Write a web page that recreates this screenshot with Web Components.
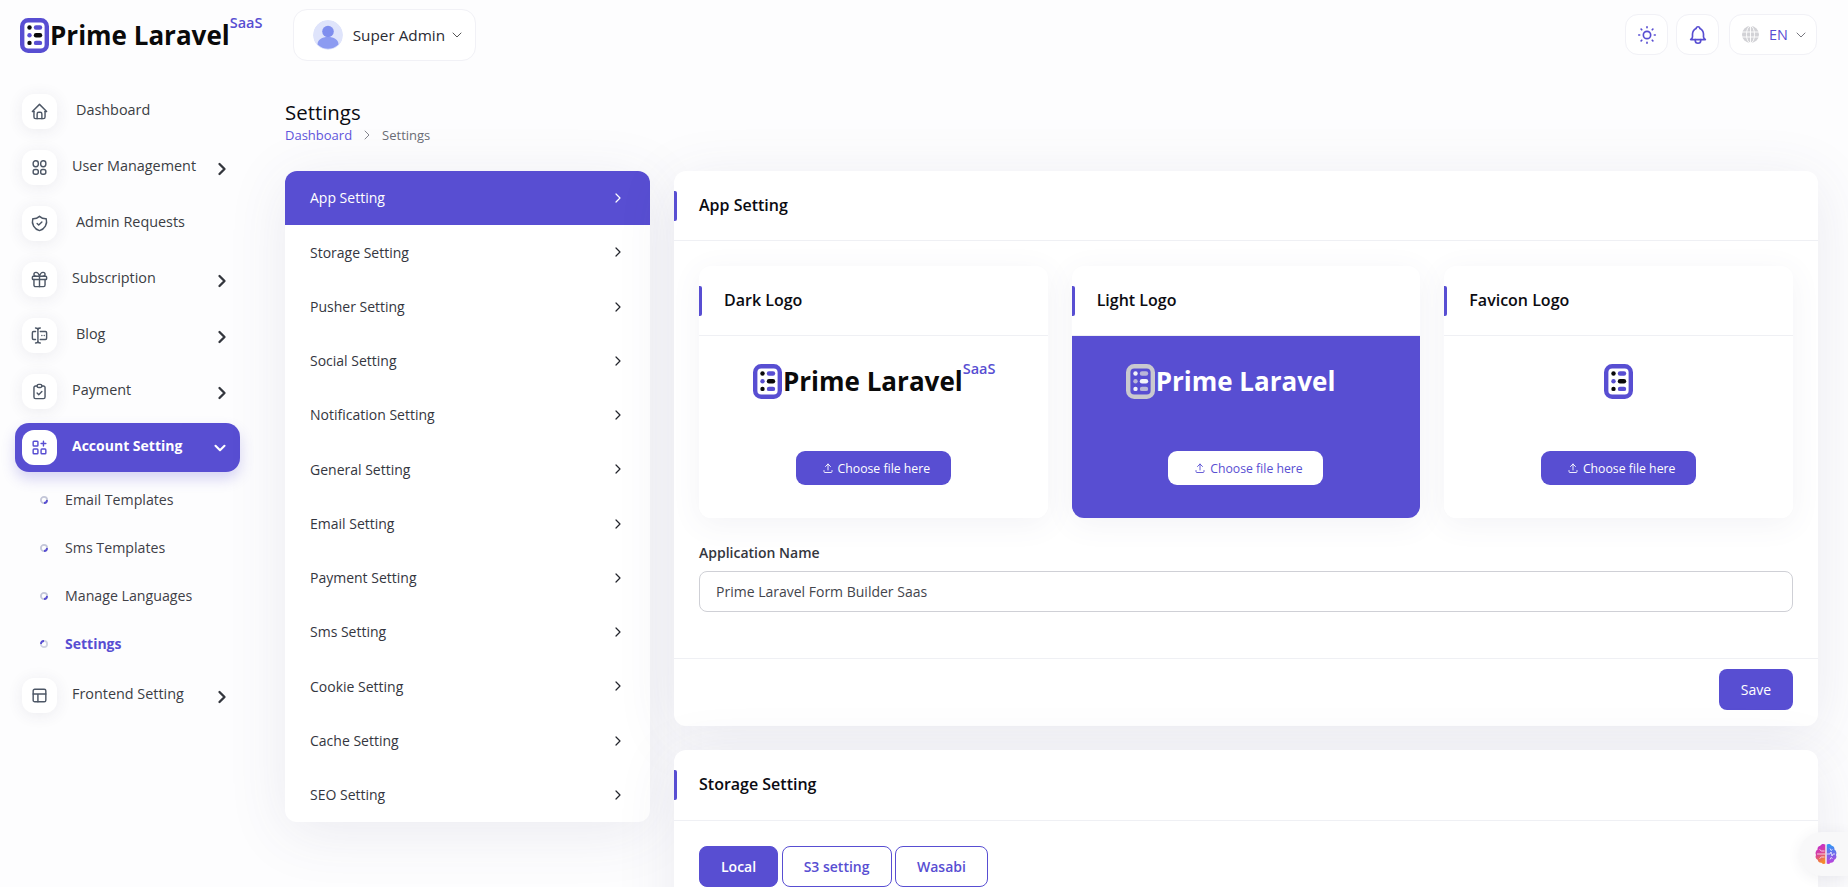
<!DOCTYPE html>
<html lang="en">
<head>
<meta charset="utf-8">
<title>Settings</title>
<style>
html,body{margin:0;padding:0;height:887px;overflow:hidden;background:#fdfdfe;font-family:"Open Sans","Noto Sans",sans-serif;}
</style>
</head>
<body>
<pl-shell>
  <pl-topbar slot="top"></pl-topbar>
  <pl-sidebar slot="side">
    <pl-side-item icon="home" gap="19">Dashboard</pl-side-item>
    <pl-side-item icon="grid" arrow="right">User Management</pl-side-item>
    <pl-side-item icon="shield" gap="19">Admin Requests</pl-side-item>
    <pl-side-item icon="gift" arrow="right">Subscription</pl-side-item>
    <pl-side-item icon="cursor" gap="19" arrow="right">Blog</pl-side-item>
    <pl-side-item icon="clipboard" arrow="right">Payment</pl-side-item>
    <pl-side-item icon="category" arrow="down" active>Account Setting</pl-side-item>
    <pl-sub-list>
      <pl-sub-item>Email Templates</pl-sub-item>
      <pl-sub-item>Sms Templates</pl-sub-item>
      <pl-sub-item>Manage Languages</pl-sub-item>
      <pl-sub-item active>Settings</pl-sub-item>
    </pl-sub-list>
    <pl-side-item icon="table" arrow="right">Frontend Setting</pl-side-item>
  </pl-sidebar>
  <pl-page-head slot="main"></pl-page-head>
  <pl-settings slot="main">
    <pl-menu slot="menu">
      <pl-menu-item active>App Setting</pl-menu-item>
      <pl-menu-item>Storage Setting</pl-menu-item>
      <pl-menu-item>Pusher Setting</pl-menu-item>
      <pl-menu-item>Social Setting</pl-menu-item>
      <pl-menu-item>Notification Setting</pl-menu-item>
      <pl-menu-item>General Setting</pl-menu-item>
      <pl-menu-item>Email Setting</pl-menu-item>
      <pl-menu-item>Payment Setting</pl-menu-item>
      <pl-menu-item>Sms Setting</pl-menu-item>
      <pl-menu-item>Cookie Setting</pl-menu-item>
      <pl-menu-item>Cache Setting</pl-menu-item>
      <pl-menu-item>SEO Setting</pl-menu-item>
    </pl-menu>
    <pl-card title="App Setting" head="70">
      <pl-logo-grid>
        <pl-logo-card title="Dark Logo" kind="dark"></pl-logo-card>
        <pl-logo-card title="Light Logo" kind="light"></pl-logo-card>
        <pl-logo-card title="Favicon Logo" kind="favicon"></pl-logo-card>
      </pl-logo-grid>
      <pl-field label="Application Name" value="Prime Laravel Form Builder Saas"></pl-field>
      <pl-button slot="footer">Save</pl-button>
    </pl-card>
    <pl-card title="Storage Setting" head="71">
      <pl-tabs>
        <pl-tab active>Local</pl-tab>
        <pl-tab>S3 setting</pl-tab>
        <pl-tab>Wasabi</pl-tab>
      </pl-tabs>
    </pl-card>
  </pl-settings>
</pl-shell>
<pl-chat></pl-chat>
<script>
const PURPLE = '#584ed2';
const ICONS = {
  home:'<path d="M5 12H3l9-9 9 9h-2"/><path d="M5 12v7a2 2 0 0 0 2 2h10a2 2 0 0 0 2-2v-7"/><path d="M9 21v-6a2 2 0 0 1 2-2h2a2 2 0 0 1 2 2v6"/>',
  grid:'<rect x="4" y="3.500" width="6.500" height="7.500" rx="3"/><rect x="13.500" y="3.500" width="6.500" height="7.500" rx="3"/><rect x="4" y="14.500" width="6.500" height="6" rx="2.500"/><rect x="13.500" y="14.500" width="6.500" height="6" rx="2.500"/>',
  shield:'<path d="M12 3a12 12 0 0 0 8.500 3 12 12 0 0 1-8.500 15A12 12 0 0 1 3.500 6 12 12 0 0 0 12 3"/><path d="M9 12l2 2 4-4"/>',
  gift:'<rect x="3" y="8" width="18" height="4" rx="1"/><path d="M12 8v13"/><path d="M19 12v7a2 2 0 0 1-2 2H7a2 2 0 0 1-2-2v-7"/><path d="M7.500 8a2.500 2.500 0 0 1 0-5A4.800 8 0 0 1 12 8a4.800 8 0 0 1 4.500-5 2.500 2.500 0 0 1 0 5"/>',
  cursor:'<path d="M7 7H4.500A1.500 1.500 0 0 0 3 8.500v7A1.500 1.500 0 0 0 4.500 17H7"/><path d="M13 7h6.500A1.500 1.500 0 0 1 21 8.500v7a1.500 1.500 0 0 1-1.500 1.500H13"/><path d="M10 4v16"/><path d="M7 2.500c1.500 0 3 .5 3 1.500 0-1 1.500-1.500 3-1.500"/><path d="M7 21.500c1.500 0 3-.5 3-1.500 0 1 1.500 1.500 3 1.500"/><path d="M15 12h.01M18 12h.01"/>',
  clipboard:'<path d="M9 5H7a2 2 0 0 0-2 2v12a2 2 0 0 0 2 2h10a2 2 0 0 0 2-2V7a2 2 0 0 0-2-2h-2"/><rect x="9" y="3" width="6" height="4" rx="2"/><path d="M9 14l2 2 4-4"/>',
  category:'<rect x="4" y="4" width="6" height="6" rx="1"/><rect x="4" y="14" width="6" height="6" rx="1"/><rect x="14" y="14" width="6" height="6" rx="1"/><path d="M14 7h6M17 4v6"/>',
  table:'<rect x="4" y="4" width="16" height="16" rx="2"/><path d="M4 10h16M10 10v10"/>',
  sun:'<circle cx="12" cy="12" r="4"/><path d="M3 12h1M12 3v1M20 12h1M12 20v1M5.600 5.600l.7.7M18.400 5.600l-.7.7M17.700 17.700l.7.7M6.300 17.700l-.7.7"/>',
  bell:'<path d="M10 5a2 2 0 1 1 4 0 7 7 0 0 1 4 6v3a4 4 0 0 0 2 3H4a4 4 0 0 0 2-3v-3a7 7 0 0 1 4-6"/><path d="M9 17v1a3 3 0 0 0 6 0v-1"/>',
  upload:'<path d="M4 17v2a2 2 0 0 0 2 2h12a2 2 0 0 0 2-2v-2"/><path d="M7 9l5-5 5 5"/><path d="M12 4v12"/>',
  right:'<path d="M9 6l6 6-6 6"/>',
  down:'<path d="M6 9l6 6 6-6"/>'
};
function svg(name, size, stroke, sw){
  return `<svg width="${size}" height="${size}" viewBox="0 0 24 24" fill="none" stroke="${stroke}" stroke-width="${sw}" stroke-linecap="round" stroke-linejoin="round" aria-hidden="true">${ICONS[name]}</svg>`;
}
function mark(kind){
  const light = kind==='light';
  const frame = light?'#c9c9cf':PURPLE, fill = light?'none':'#fff';
  const a = light?'#f3f3fa':'#0a0a0a', b = light?'#b9b6d8':PURPLE, c = light?'#f3f3fa':'#0a0a0a';
  return `<svg width="29" height="35" viewBox="0 0 29 35" aria-hidden="true">
  <rect x="2.200" y="2.200" width="24.600" height="30.600" rx="6" fill="${fill}" stroke="${frame}" stroke-width="4.400"/>
  <circle cx="9.500" cy="9.500" r="2.200" fill="${a}"/><rect x="13.800" y="7.300" width="8.400" height="4.400" rx="2.200" fill="${b}"/>
  <circle cx="9.500" cy="17.300" r="2.200" fill="${b}"/><rect x="13.800" y="15.100" width="8.400" height="4.400" rx="2.200" fill="${c}"/>
  <circle cx="9.500" cy="24.900" r="2.200" fill="${a}"/><rect x="13.800" y="22.700" width="8.400" height="4.400" rx="2.200" fill="${b}"/></svg>`;
}
function def(name, render){
  customElements.define(name, class extends HTMLElement{
    connectedCallback(){
      if(this.shadowRoot) return;
      this.attachShadow({mode:'open'}).innerHTML = render(this);
    }
  });
}
def('pl-shell', ()=>`<style>
:host{display:block;height:887px;overflow:hidden}
.top{height:69px}
.row{display:grid;grid-template-columns:285px 1fr;height:818px;overflow:hidden}
.main{padding-right:30px;min-width:0}
</style><div class="top"><slot name="top"></slot></div>
<div class="row"><div><slot name="side"></slot></div><div class="main"><slot name="main"></slot></div></div>`);
def('pl-brand', el=>{
  const kind = el.getAttribute('kind')||'dark';
  const color = kind==='light'?'#fff':'#0a0a0a';
  const saas = kind==='dark' ? '<span class="s">SaaS</span>' : '<span class="spacer"></span>';
  return `<style>
:host{display:inline-flex;align-items:flex-start;height:35px;color:${color}}
.t{font-size:26px;font-weight:700;line-height:35px;margin-left:1px;white-space:nowrap}
.s{font-size:14.500px;font-weight:600;color:${PURPLE};line-height:14px;margin-top:-2px;width:31px;white-space:nowrap}
.spacer{width:31px}
svg{flex:none}
</style>${mark(kind)}<span class="t">Prime Laravel</span>${saas}`;
});
def('pl-topbar', ()=>`<style>
:host{display:flex;align-items:center;height:69px;padding:0 31px 0 20px;box-sizing:border-box;font-family:"Open Sans",sans-serif}
pl-brand{margin-top:1px}
.user{margin-left:32px;height:52px;width:183px;box-sizing:border-box;border:1px solid #f1f1f6;border-radius:14px;background:#fff;display:flex;align-items:center;padding-left:19px;font-size:15.300px;font-weight:500;color:#2b2b33;margin-top:1px}
.av{width:30px;height:30px;border-radius:50%;margin-right:10px;flex:none;display:block}
.chev{margin-left:4px;display:flex}
.sp{flex:1}
.b{width:43px;height:41px;box-sizing:border-box;border:1px solid #f1f1f6;border-radius:13px;background:#fff;display:flex;align-items:center;justify-content:center;margin-left:8px}
.lang{width:88px;justify-content:flex-start;padding-left:12px;color:${PURPLE};font-size:14.400px;font-weight:400;margin-left:10px}
.lang span{margin-left:10px}
.lang .c{margin-left:5px;display:flex}
</style>
<pl-brand kind="dark"></pl-brand>
<div class="user">
<svg class="av" viewBox="0 0 30 30" aria-hidden="true"><circle cx="15" cy="15" r="15" fill="#dfe4fb"/><circle cx="15" cy="11.500" r="5.800" fill="#7f8eee"/><path d="M4.500 24.500c0-5 4.500-7.500 10.500-7.500s10.500 2.500 10.500 7.500a15 15 0 0 1-21 0z" fill="#8c9bf1"/></svg>
<span>Super Admin</span><span class="chev">${svg('down',16,'#555',1.500)}</span></div>
<div class="sp"></div>
<div class="b">${svg('sun',22,PURPLE,1.800)}</div>
<div class="b">${svg('bell',22,PURPLE,1.800)}</div>
<div class="b lang"><svg width="17" height="17" viewBox="0 0 17 17" fill="none" stroke="#fff" stroke-width=".9" aria-hidden="true"><circle cx="8.500" cy="8.500" r="8.500" fill="#d2d2d6" stroke="none"/><path d="M0 6h17M0 11h17M8.500 0v17"/><ellipse cx="8.500" cy="8.500" rx="4" ry="8.500"/></svg><span>EN</span><span class="c">${svg('down',16,'#77777f',1.500)}</span></div>`);
def('pl-sidebar', ()=>`<style>:host{display:block;padding-top:18px;font-family:"Open Sans",sans-serif}</style><slot></slot>`);
def('pl-side-item', el=>{
  const active = el.hasAttribute('active');
  const gap = el.getAttribute('gap')||'15';
  const arrow = el.getAttribute('arrow');
  const ic = active?PURPLE:'#4d5766';
  const arrowC = active?'#fff':'#33363d';
  return `<style>
:host{display:flex;align-items:center;height:49px;width:225px;box-sizing:border-box;margin:0 0 7px 15px;padding:0 ${arrow==='down'?11:8}px 0 7px;border-radius:14px;font-size:${active?14:14.400}px;font-weight:${active?700:500};color:${active?'#fff':'#3b3d44'};${active?`background:${PURPLE};box-shadow:0 7px 14px rgba(88,78,210,.24);`:''}}
.i{width:35px;height:35px;border-radius:12px;background:#fff;display:flex;align-items:center;justify-content:center;flex:none;${active?'':'box-shadow:0 2px 16px rgba(60,60,90,.09);'}}
.l{margin-left:${gap}px;padding-bottom:5px;white-space:nowrap;flex:1}
.a{display:flex;margin-top:${arrow==='down'?0:3}px}
</style><span class="i">${svg(el.getAttribute('icon'),19,ic,1.800)}</span><span class="l"><slot></slot></span>${arrow?`<span class="a">${svg(arrow,arrow==='down'?18:20,arrowC,2.800)}</span>`:''}`;
});
def('pl-sub-list', ()=>`<style>:host{display:block;margin:-3px 0 3px}</style><slot></slot>`);
def('pl-sub-item', el=>{
  const a = el.hasAttribute('active');
  return `<style>
:host{display:flex;align-items:center;height:48px;padding-left:40px;font-size:${a?14:14.200}px;font-weight:${a?700:400};color:${a?PURPLE:'#3f4047'}}
svg{margin-right:17px;flex:none}
span{padding-bottom:2px}
</style><svg width="8" height="8" viewBox="0 0 8 8" fill="none" stroke-width="1.800" aria-hidden="true"><circle cx="4" cy="4" r="3.100" stroke="${a?'#cfd2e2':'#c3c6d8'}"/><path d="${a?'M1 4a3 3 0 0 1 3-3':'M7 4a3 3 0 0 1-3 3'}" stroke="${PURPLE}"/></svg><span><slot></slot></span>`;
});
def('pl-page-head', ()=>`<style>
:host{display:block;height:102px;box-sizing:border-box;padding-top:29px;font-family:"Open Sans",sans-serif}
h1{margin:0;font-size:20.400px;line-height:28px;font-weight:500;color:#0b0b12}
.c{display:flex;align-items:center;font-size:13px;line-height:18px;color:#6b6d76}
a{color:#5f55dc;text-decoration:none}
svg{margin:0 7px 0 7px}
</style><h1>Settings</h1><div class="c"><a>Dashboard</a>${svg('right',16,'#85868e',1.500)}<span>Settings</span></div>`);
def('pl-settings', ()=>`<style>
:host{display:grid;grid-template-columns:365px 1fr;column-gap:24px;align-items:start}
.r{display:flex;flex-direction:column;gap:24px;min-width:0}
</style><slot name="menu"></slot><div class="r"><slot></slot></div>`);
def('pl-menu', ()=>`<style>
:host{display:block;background:#fff;border-radius:12px;overflow:hidden;box-shadow:0 10px 60px rgba(70,70,120,.1)}
</style><slot></slot>`);
def('pl-menu-item', el=>{
  const a = el.hasAttribute('active');
  return `<style>
:host{display:flex;align-items:center;justify-content:space-between;height:54.250px;padding:0 24px 0 25px;box-sizing:border-box;font-size:14px;font-weight:500;color:${a?'#fff':'#343640'};background:${a?PURPLE:'transparent'}}
span{display:block;padding-bottom:.5px}
svg{display:block}
</style><span><slot></slot></span>${svg('right',16,a?'#fff':'#23252c',1.800)}`;
});
def('pl-card', el=>`<style>
:host{display:block;background:#fff;border-radius:12px;box-shadow:0 10px 60px rgba(70,70,120,.1);min-height:200px}
.h{height:${el.getAttribute('head')}px;box-sizing:border-box;border-bottom:1px solid #eff0f4;position:relative;padding:0 0 2px 25px;display:flex;align-items:center;font-size:16px;font-weight:600;color:#0b0b12}
.h::before{content:"";position:absolute;left:0;top:20px;width:3px;height:30px;background:${PURPLE};border-radius:0 2px 2px 0}
.b{padding:25px 25px 0}
.f{display:none}
.f.on{display:flex;justify-content:flex-end;border-top:1px solid #eff0f4;padding:10px 25px 16px;margin-top:46px}
</style><div class="h">${el.getAttribute('title')}</div><div class="b"><slot></slot></div><div class="f ${el.querySelector('[slot=footer]')?'on':''}"><slot name="footer"></slot></div>`);
def('pl-logo-grid', ()=>`<style>:host{display:grid;grid-template-columns:repeat(3,1fr);gap:24px}</style><slot></slot>`);
def('pl-logo-card', el=>{
  const kind = el.getAttribute('kind');
  const light = kind==='light';
  const logo = kind==='favicon' ? mark('dark') : `<pl-brand kind="${kind}"></pl-brand>`;
  return `<style>
:host{display:block;height:252px;background:#fff;border-radius:12px;overflow:hidden;box-shadow:0 6px 30px rgba(80,80,130,.07)}
.h{height:70px;box-sizing:border-box;border-bottom:1px solid #eff0f4;position:relative;padding:0 0 2px 25px;display:flex;align-items:center;font-size:16px;font-weight:600;color:#0b0b12}
.h::before{content:"";position:absolute;left:0;top:20px;width:3px;height:30px;background:${PURPLE};border-radius:0 2px 2px 0}
.b{height:182px;box-sizing:border-box;padding-top:28px;display:flex;flex-direction:column;align-items:center;background:${light?PURPLE:'#fff'}}
.l{height:35px;display:flex}
.u{margin-top:52px;width:155px;height:34px;border-radius:9px;background:${light?'#fff':PURPLE};color:${light?PURPLE:'#fff'};display:flex;align-items:center;justify-content:center;padding-left:5px;box-sizing:border-box;font-size:12.250px;font-weight:500;gap:4px}
.u svg{display:block}
</style><div class="h">${el.getAttribute('title')}</div><div class="b"><div class="l">${logo}</div><div class="u">${svg('upload',12,light?PURPLE:'#fff',1.800)}<span>Choose file here</span></div></div>`;
});
def('pl-field', el=>`<style>
:host{display:block;margin-top:25px}
label{display:block;font-size:14px;font-weight:600;line-height:20px;color:#34363d;margin-bottom:8px}
.i{height:41px;box-sizing:border-box;border:1px solid #cfd0d6;border-radius:8px;padding:0 16px;display:flex;align-items:center;font-size:14px;font-weight:500;color:#43454c;background:#fff}
</style><label>${el.getAttribute('label')}</label><div class="i">${el.getAttribute('value')}</div>`);
def('pl-button', ()=>`<style>
:host{display:flex;align-items:center;justify-content:center;width:74px;height:41px;border-radius:8px;background:${PURPLE};color:#fff;font-size:14px;font-weight:500}
</style><slot></slot>`);
def('pl-tabs', ()=>`<style>:host{display:flex;gap:3.500px;margin-bottom:20px}</style><slot></slot>`);
def('pl-tab', el=>{
  const a = el.hasAttribute('active');
  return `<style>
:host{display:flex;align-items:center;justify-content:center;height:41px;box-sizing:border-box;padding:0 21px;border:1px solid ${PURPLE};border-radius:8px;font-size:14px;font-weight:600;background:${a?PURPLE:'#fff'};color:${a?'#fff':PURPLE}}
</style><slot></slot>`;
});
def('pl-chat', ()=>`<style>
:host{position:fixed;right:0;top:832px;width:48px;height:44px;background:#f8f8f9;border-radius:22px 0 0 22px;box-shadow:0 2px 14px rgba(60,60,90,.08);display:flex;align-items:center;padding-left:14px;box-sizing:border-box}
</style><svg width="24" height="24" viewBox="0 0 24 24" aria-hidden="true">
<defs><linearGradient id="g1" x1="0" y1="0" x2=".3" y2="1"><stop offset="0" stop-color="#b92be0"/><stop offset=".55" stop-color="#d9409a"/><stop offset="1" stop-color="#f58a2e"/></linearGradient>
<linearGradient id="g2" x1=".5" y1="0" x2=".5" y2="1"><stop offset="0" stop-color="#2f9bf5"/><stop offset=".55" stop-color="#7a63ea"/><stop offset="1" stop-color="#c63fd8"/></linearGradient></defs>
<path d="M11.300 2.500C9.500 1.500 7.200 2 6.300 3.800 4.300 4 3.200 5.800 3.600 7.600 1.700 8.700 1 11.200 2 13c-1 1.800-.2 4 1.700 4.800.2 2 1.900 3.300 3.800 3 1 1.300 2.600 1.500 3.800.8z" fill="url(#g1)"/>
<path d="M12.700 2.500c1.800-1 4.100-.5 5 1.300 2 .2 3.100 2 2.700 3.800 1.900 1.100 2.600 3.600 1.600 5.400 1 1.800.2 4-1.700 4.800-.2 2-1.900 3.300-3.800 3-1 1.300-2.600 1.500-3.800.8z" fill="url(#g2)"/>
<path d="M3 12h8M5.500 7.500l2 1.500h3M5.500 16.500l2-1.500h3M13 12h3l1-2 1 4 1-2h2M16 6.500l1 2 1.500-1M16 17.500l1-2 1.500 1" fill="none" stroke="#fff" stroke-width=".9" stroke-opacity=".8"/></svg>`);
</script>
</body>
</html>
